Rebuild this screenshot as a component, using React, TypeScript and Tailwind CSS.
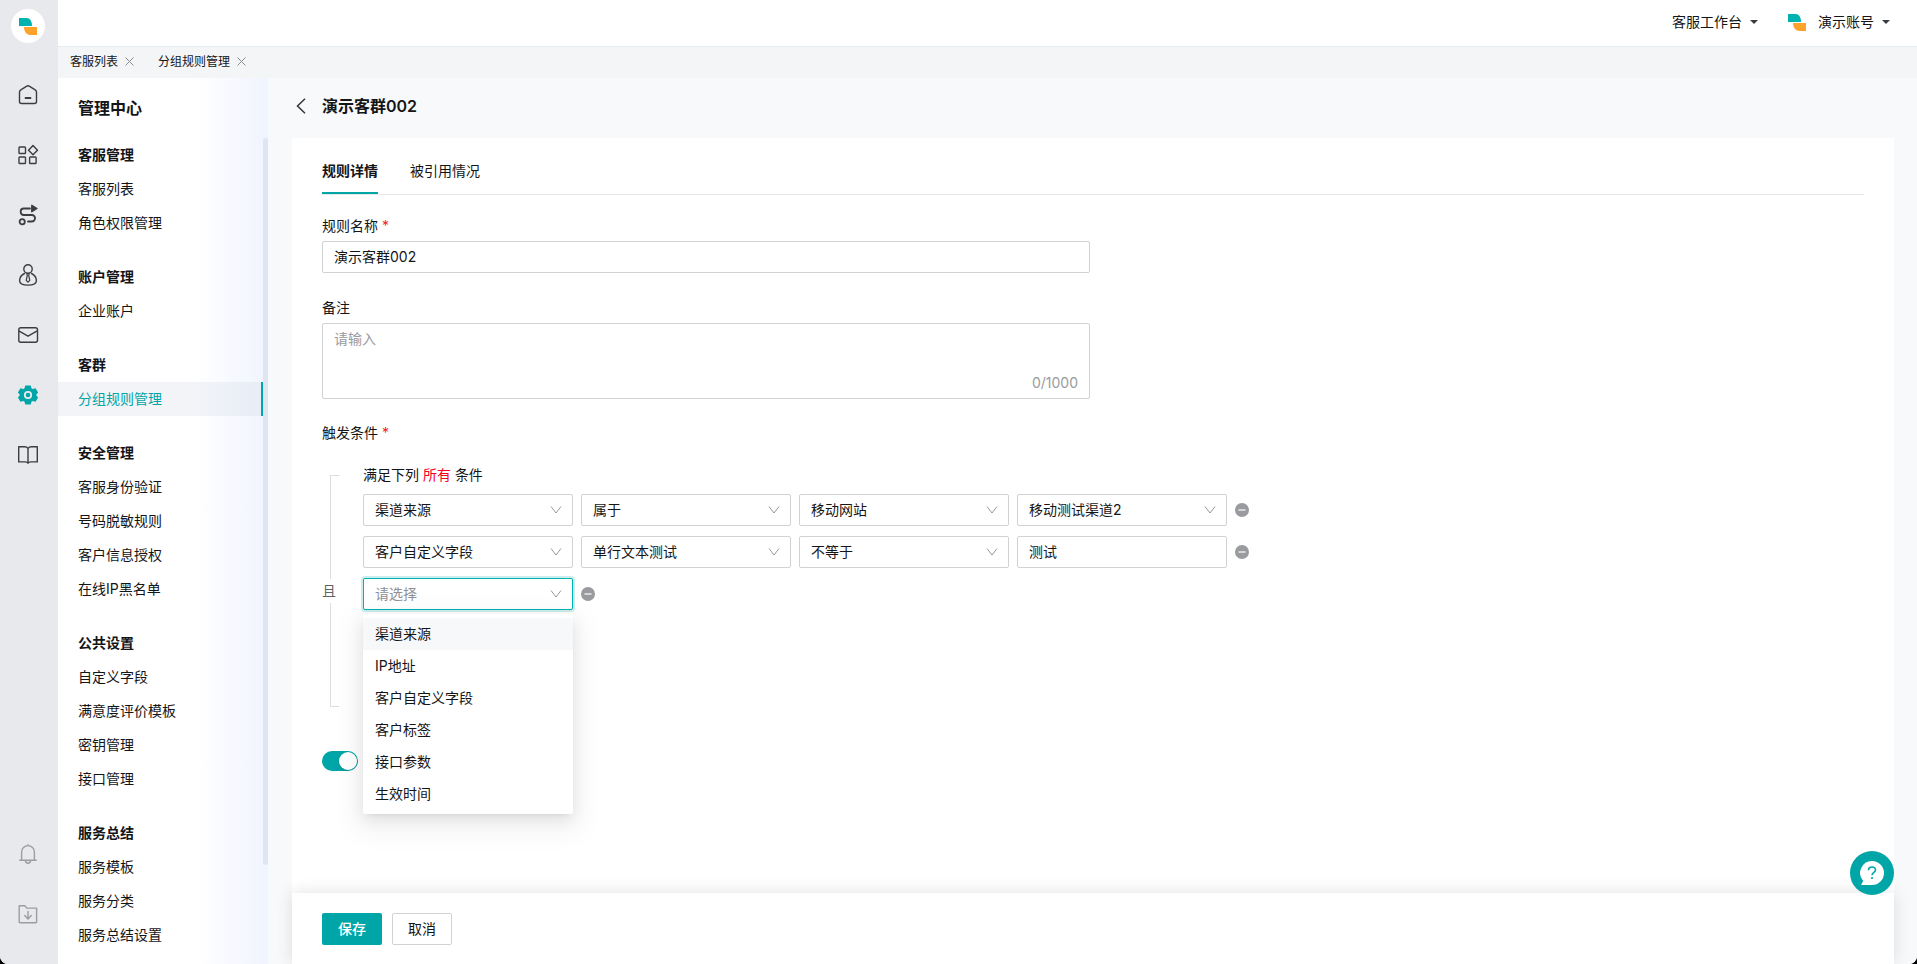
import React, { useState } from "react";
import clsx from "clsx";

const menuGroups = [
  { title: "客服管理", items: ["客服列表", "角色权限管理"] },
  { title: "账户管理", items: ["企业账户"] },
  { title: "客群", items: ["分组规则管理"] },
  {
    title: "安全管理",
    items: ["客服身份验证", "号码脱敏规则", "客户信息授权", "在线IP黑名单"],
  },
  {
    title: "公共设置",
    items: ["自定义字段", "满意度评价模板", "密钥管理", "接口管理"],
  },
  { title: "服务总结", items: ["服务模板", "服务分类", "服务总结设置"] },
];

const fieldOptions = [
  "渠道来源",
  "IP地址",
  "客户自定义字段",
  "客户标签",
  "接口参数",
  "生效时间",
];

function Logo({ className }: { className?: string }) {
  return (
    <svg viewBox="0 0 18 17" className={className} aria-hidden="true">
      <path d="M0 0h7.5C11 0 13 3 13 8H0z" fill="#00b2b0" />
      <path d="M5 9h13v8h-6.500C8 17 5 14 5 9z" fill="#ffa22b" />
    </svg>
  );
}

type IconProps = { children: React.ReactNode };

function RailIcon({ children }: IconProps) {
  return (
    <svg
      viewBox="0 0 22 22"
      className="size-[22px]"
      fill="none"
      stroke="currentColor"
      strokeWidth="1.4"
      strokeLinecap="round"
      strokeLinejoin="round"
      aria-hidden="true"
    >
      {children}
    </svg>
  );
}

const railItems = [
  {
    name: "首页",
    icon: (
      <RailIcon>
        <path d="M2.500 8.200c0-1 .5-1.800 1.300-2.300l5.600-3.600c1-.6 2.200-.6 3.200 0l5.600 3.600c.8.5 1.300 1.300 1.300 2.300v9.300c0 1.200-.8 2-2 2h-13c-1.200 0-2-.8-2-2z" />
        <path d="M8.500 14h5" strokeWidth="1.8" />
      </RailIcon>
    ),
  },
  {
    name: "应用",
    icon: (
      <RailIcon>
        <rect x="2" y="3" width="6.500" height="6.500" rx="0.8" />
        <rect x="2" y="13" width="6.500" height="6.500" rx="0.8" />
        <rect x="12.600" y="13" width="6.500" height="6.500" rx="0.8" />
        <path d="M16 1.600 20.500 6.200 16 10.800 11.500 6.200z" />
      </RailIcon>
    ),
  },
  {
    name: "流程",
    icon: (
      <RailIcon>
        <circle cx="5.200" cy="17.800" r="2.600" strokeWidth="1.8" />
        <path
          d="M13 4.500H6.800a2.900 3 0 0 0 0 6.500h8a3 3 0 0 1 0 6.500H11"
          strokeWidth="1.8"
        />
        <path d="M14.800 1.300v6.400l5.200-3.200z" fill="currentColor" />
      </RailIcon>
    ),
  },
  {
    name: "客户",
    icon: (
      <RailIcon>
        <circle cx="11" cy="5" r="4.200" />
        <path d="M7.500 9.500C4.500 11 2.600 13.600 2.600 16.800c0 3 3.500 4.300 8.400 4.300s8.400-1.300 8.400-4.300c0-3.200-1.900-5.800-4.900-7.300" />
        <path d="M9.800 9.500h2.400l-.5 2 1.100 4.800-1.800 1.900-1.800-1.900 1.100-4.800z" strokeWidth="1.200" />
      </RailIcon>
    ),
  },
  {
    name: "消息",
    icon: (
      <RailIcon>
        <rect x="1.800" y="3.800" width="18.700" height="14.400" rx="2" />
        <path d="m2.200 7.200 8.800 5 8.800-5" />
      </RailIcon>
    ),
  },
  {
    name: "设置",
    active: true,
    icon: (
      <RailIcon>
        <path
          fillRule="evenodd"
          d="M8.300 1.500h5.400l.9 2.900 1 .6 3-.7 2.500 4.300-2.100 2.400 2.100 2.400-2.500 4.300-3-.7-1 .6-.9 2.900H8.300l-.9-2.900-1-.6-3 .7-2.500-4.300L3 11 .9 8.600l2.500-4.300 3 .7 1-.6z"
          fill="currentColor"
          stroke="none"
        />
        <circle cx="11" cy="11" r="3.200" stroke="#e8e9ed" strokeWidth="1.800" />
      </RailIcon>
    ),
  },
  {
    name: "知识库",
    icon: (
      <RailIcon>
        <path d="M11 4.500C10.300 3.200 9 2.700 7.500 2.700H1.700v15.200h6.500c1.300 0 2.200.3 2.800 1.300.6-1 1.500-1.300 2.800-1.300h6.500V2.700h-5.800c-1.500 0-2.800.5-3.500 1.800zM11 4.500v14.300" />
      </RailIcon>
    ),
  },
];

function CloseIcon() {
  return (
    <svg viewBox="0 0 9 9" className="size-[9px]" stroke="#8b8d91" aria-hidden="true">
      <path d="m.5.5 8 8m0-8-8 8" />
    </svg>
  );
}

function Caret() {
  return (
    <svg viewBox="0 0 8 4" className="h-1 w-2" fill="#3a3c40" aria-hidden="true">
      <path d="M0 0h8L4 4z" />
    </svg>
  );
}

type SelectProps = {
  label: string;
  value: string;
  focused?: boolean;
};

function Select({ label, value, focused }: SelectProps) {
  return (
    <div className="relative w-[210px]">
      <select
        aria-label={label}
        defaultValue={value}
        className={clsx(
          "block h-8 w-full appearance-none rounded-xs border bg-white px-[11px] leading-5 outline-none",
          focused
            ? "border-[#00b2b0] text-[#8f9195] ring-2 ring-[#00a5a7]/20"
            : "border-[#d0d2d4]"
        )}
      >
        <option>{value}</option>
      </select>
      <svg
        viewBox="0 0 12 8"
        className="pointer-events-none absolute top-3 right-[11px] h-2 w-3"
        fill="none"
        stroke="#96989c"
        aria-hidden="true"
      >
        <path d="m1 .5 5 6.500L11 .5" />
      </svg>
    </div>
  );
}

function RemoveButton() {
  return (
    <button type="button" aria-label="删除条件">
      <svg viewBox="0 0 14 14" className="size-3.5" aria-hidden="true">
        <circle cx="7" cy="7" r="7" fill="#999b9f" />
        <path d="M3.500 7h7" stroke="#fff" strokeWidth="1.200" />
      </svg>
    </button>
  );
}

function Rail() {
  return (
    <aside className="flex w-[58px] shrink-0 flex-col items-center bg-[#e8e9ed] pt-[9px] pr-0.5 pb-5 text-[#3b3d40]">
      <div className="mb-[22px] flex size-[34px] items-center justify-center rounded-full bg-white">
        <Logo className="h-[17px] w-[18px]" />
      </div>
      <nav className="flex flex-1 flex-col">
        {railItems.map((item) => (
          <a
            key={item.name}
            href="#"
            aria-label={item.name}
            className={clsx(
              "flex h-[60px] w-14 items-center justify-center",
              item.active && "text-[#00a5a7]"
            )}
          >
            {item.icon}
          </a>
        ))}
      </nav>
      <div className="flex flex-col text-[#9b9da1]">
        <button
          type="button"
          aria-label="通知"
          className="flex h-[60px] w-14 items-center justify-center"
        >
          <RailIcon>
            <path d="M2.800 17.200h16.400M4.600 17V9a6.400 6.400 0 0 1 12.800 0v8M11 2.300V1.600M8.500 18c.3 1.500 1.300 2.200 2.500 2.200s2.200-.7 2.500-2.200" />
          </RailIcon>
        </button>
        <button
          type="button"
          aria-label="下载"
          className="flex h-[60px] w-14 items-center justify-center"
        >
          <RailIcon>
            <path d="M2.200 19V2.700h5.600l2 2.400h9.800V19a.8.8 0 0 1-.8.800H3a.8.8 0 0 1-.8-.8zM11 8.500v7.200M7.700 12.600l3.300 3.300 3.300-3.300" />
          </RailIcon>
        </button>
      </div>
    </aside>
  );
}

function SideMenu() {
  return (
    <aside className="relative flex w-[210px] shrink-0 flex-col bg-linear-to-r from-white from-65% to-[#f0f4ff]">
      <h2 className="flex h-[60px] items-center px-5 text-base font-semibold">
        管理中心
      </h2>
      <nav className="mr-[5px] flex min-h-0 flex-1 flex-col gap-5 overflow-hidden">
        {menuGroups.map((group) => (
          <div key={group.title} className="shrink-0">
            <h3 className="flex h-[34px] items-center px-5 font-bold">
              {group.title}
            </h3>
            {group.items.map((item) => (
              <a
                key={item}
                href="#"
                className={clsx(
                  "flex h-[34px] items-center px-5",
                  item === "分组规则管理" &&
                    "border-r-2 border-[#00a5a7] bg-linear-to-r from-[#f3f4f8] from-65% to-[#e8edf6] text-[#00a5a7]"
                )}
              >
                {item}
              </a>
            ))}
          </div>
        ))}
      </nav>
      {/* Scroll thumb */}
      <div className="absolute top-[60px] right-0 h-[82%] w-[5px] rounded-full bg-[#dfe6f2]" />
    </aside>
  );
}

function RuleForm() {
  const [enabled, setEnabled] = useState(true);

  return (
    <form className="flex flex-col px-[30px]">
      <div role="tablist" className="flex h-[57px] gap-8 border-b border-[#e5e6e8]">
        <button
          type="button"
          role="tab"
          aria-selected="true"
          className="border-b-2 border-[#00a5a7] pt-3 font-bold"
        >
          规则详情
        </button>
        <button
          type="button"
          role="tab"
          aria-selected="false"
          className="border-b-2 border-transparent pt-3"
        >
          被引用情况
        </button>
      </div>

      <label htmlFor="rule-name" className="mt-[21px] mb-[5px]">
        规则名称 <span className="text-[#f5222d]">*</span>
      </label>
      <input
        id="rule-name"
        defaultValue="演示客群002"
        className="h-8 w-full max-w-[768px] rounded-xs border border-[#d0d2d4] px-[11px] pb-0.5 outline-none"
      />

      <label htmlFor="remark" className="mt-[25px] mb-[5px]">
        备注
      </label>
      <div className="relative h-[76px] w-full max-w-[768px]">
        <textarea
          id="remark"
          placeholder="请输入"
          className="block size-full resize-none rounded-xs border border-[#d0d2d4] px-[11px] py-[5px] outline-none placeholder:text-[#999b9f]"
        />
        <span className="absolute right-3 bottom-1.5 text-[#999b9f]">0/1000</span>
      </div>

      <p className="mt-6">
        触发条件 <span className="text-[#f5222d]">*</span>
      </p>

      {/* Conditions */}
      <div className="mt-[22px] flex">
        <div className="mt-[10px] flex h-[232px] w-[41px] flex-col text-[#5f6165]">
          <div className="ml-2 w-[9px] flex-1 border-t border-l border-[#dcdde0]" />
          <span className="h-6 leading-6">且</span>
          <div className="ml-2 w-[9px] flex-1 border-b border-l border-[#dcdde0]" />
        </div>
        <div className="flex flex-col gap-[10px]">
          <p className="-mb-px">
            满足下列 <span className="text-[#f5001d]">所有</span> 条件
          </p>
          <div className="flex items-center gap-2">
            <Select label="条件字段" value="渠道来源" />
            <Select label="关系" value="属于" />
            <Select label="渠道类型" value="移动网站" />
            <Select label="渠道" value="移动测试渠道2" />
            <RemoveButton />
          </div>
          <div className="flex items-center gap-2">
            <Select label="条件字段" value="客户自定义字段" />
            <Select label="自定义字段" value="单行文本测试" />
            <Select label="关系" value="不等于" />
            <input
              aria-label="条件值"
              defaultValue="测试"
              className="h-8 w-[210px] rounded-xs border border-[#d0d2d4] px-[11px] pb-0.5 outline-none"
            />
            <RemoveButton />
          </div>
          <div className="relative flex items-center gap-2">
            <Select label="条件字段" value="请选择" focused />
            <RemoveButton />
            <ul
              role="listbox"
              className="absolute top-9 left-0 z-10 w-[210px] rounded-xs bg-white py-1 shadow-[0_3px_6px_-4px_rgba(0,0,0,0.12),0_6px_16px_0_rgba(0,0,0,0.08),0_9px_28px_8px_rgba(0,0,0,0.05)]"
            >
              {fieldOptions.map((option, index) => (
                <li
                  key={option}
                  role="option"
                  aria-selected={index === 0}
                  className={clsx(
                    "flex h-8 items-center px-3",
                    index === 0 && "bg-[#f7f8fa]"
                  )}
                >
                  {option}
                </li>
              ))}
            </ul>
          </div>
        </div>
      </div>

      <label className="relative mt-11 flex h-5 w-9">
        <input
          type="checkbox"
          role="switch"
          aria-label="启用规则"
          checked={enabled}
          onChange={(e) => setEnabled(e.target.checked)}
          className="peer h-5 w-9 appearance-none rounded-full bg-[#c4c6ca] checked:bg-[#00a5a7]"
        />
        <span className="pointer-events-none absolute top-px left-px size-[18px] rounded-full bg-white shadow-sm peer-checked:right-px peer-checked:left-auto" />
      </label>
    </form>
  );
}

function App(): React.JSX.Element {
  return (
    <div className="h-screen bg-black">
      <div className="flex h-full overflow-hidden rounded-b-lg bg-white font-[Inter,'Noto_Sans_CJK_SC',sans-serif] text-sm leading-5 text-[#141517]">
        <Rail />
        <div className="flex min-w-0 flex-1 flex-col">
          <header className="flex h-[47px] shrink-0 items-center justify-end border-b border-[#e4ebf1] pr-[27px] pb-0.5">
            <button type="button" className="flex items-center gap-2">
              客服工作台
              <Caret />
            </button>
            <button type="button" className="ml-[30px] flex items-center gap-2">
              <Logo className="mr-1 h-[17px] w-[18px]" />
              演示账号
              <Caret />
            </button>
          </header>

          {/* Opened pages */}
          <div className="flex h-[31px] shrink-0 items-center gap-6 bg-[#f4f5f7] px-3 pb-0.5 text-xs">
            {["客服列表", "分组规则管理"].map((tab) => (
              <div key={tab} className="flex items-center gap-[7px]">
                <a href="#">{tab}</a>
                <button type="button" aria-label={`关闭${tab}`}>
                  <CloseIcon />
                </button>
              </div>
            ))}
          </div>

          <div className="flex min-h-0 flex-1">
            <SideMenu />
            <main className="relative flex min-w-0 flex-1 flex-col bg-[#f8f9fb] pr-[23px] pl-6">
              <div className="flex h-[60px] shrink-0 items-center gap-4 pb-1 pl-1 text-base font-semibold">
                <button type="button" aria-label="返回">
                  <svg
                    viewBox="0 0 10 16"
                    className="h-4 w-[10px]"
                    fill="none"
                    stroke="#333538"
                    strokeWidth="1.500"
                    aria-hidden="true"
                  >
                    <path d="M9 .8 1.500 8 9 15.200" />
                  </svg>
                </button>
                <h1>演示客群002</h1>
              </div>
              <div className="min-h-0 flex-1 bg-white">
                <RuleForm />
              </div>
              <footer className="flex h-[71px] shrink-0 gap-[10px] bg-white px-[30px] pt-5 shadow-[0_0_16px_rgba(0,0,0,0.12)]">
                <button
                  type="button"
                  className="h-8 w-[60px] rounded-xs bg-[#00a5a7] font-medium text-white"
                >
                  保存
                </button>
                <button
                  type="button"
                  className="h-8 w-[60px] rounded-xs border border-[#d0d2d4]"
                >
                  取消
                </button>
              </footer>
              {/* Help */}
              <button
                type="button"
                aria-label="帮助"
                className="absolute right-[23px] bottom-[69px] flex size-11 items-center justify-center rounded-full bg-[#00a5a7]"
              >
                <svg viewBox="0 0 24 24" className="size-6" aria-hidden="true">
                  <path
                    d="M12 0a12 12 0 1 1 0 24H1l2.200-4A12 12 0 0 1 12 0z"
                    fill="#fff"
                  />
                  <path
                    d="M8.500 9.300c0-2 1.500-3.300 3.500-3.300s3.500 1.200 3.500 3c0 2.400-3.500 2.500-3.500 5.300m0 1.700v2"
                    fill="none"
                    stroke="#00a5a7"
                    strokeWidth="1.600"
                  />
                </svg>
              </button>
            </main>
          </div>
        </div>
      </div>
    </div>
  );
}

export default App;
